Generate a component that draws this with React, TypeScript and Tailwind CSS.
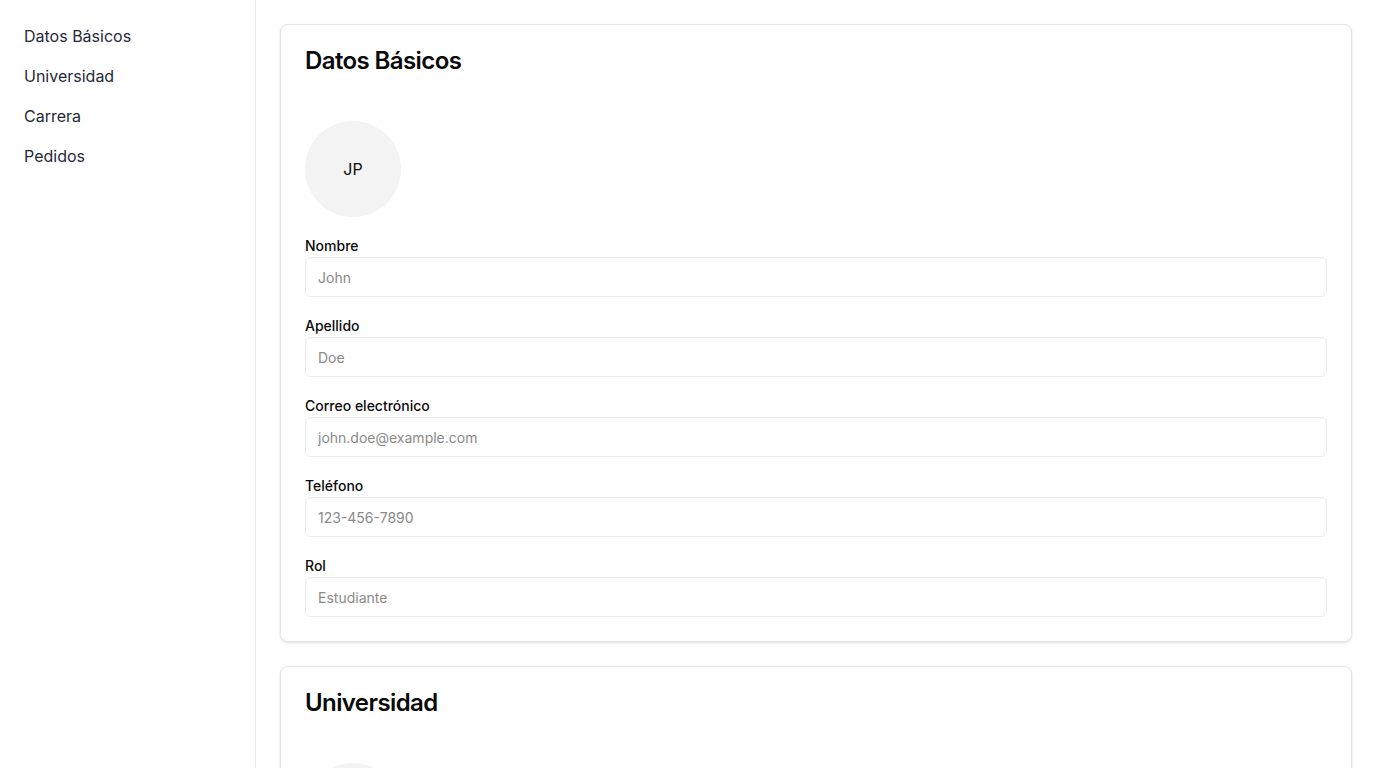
const NAV = ['Datos Básicos', 'Universidad', 'Carrera', 'Pedidos'];

const FIELDS = [
  { label: 'Nombre', placeholder: 'John' },
  { label: 'Apellido', placeholder: 'Doe' },
  { label: 'Correo electrónico', placeholder: 'john.doe@example.com' },
  { label: 'Teléfono', placeholder: '123-456-7890' },
  { label: 'Rol', placeholder: 'Estudiante' },
];

const UNI_FIELDS = [
  { label: 'Universidad', placeholder: 'Universidad Nacional' },
  { label: 'Facultad', placeholder: 'Ingeniería' },
];

function Section({ title, initials, fields }: { title: string; initials: string; fields: { label: string; placeholder: string }[] }) {
  return (
    <section className="rounded-lg border border-[#e5e5e5] bg-white shadow-sm">
      <div className="px-6 pt-6 pb-12">
        <h2 className="text-2xl font-semibold leading-none tracking-tight text-[#0a0a0a]">{title}</h2>
      </div>
      <div className="px-6 pb-6">
        <div className="w-24 h-24 rounded-full bg-[#f3f3f3] flex items-center justify-center text-base text-[#0a0a0a]">
          {initials}
        </div>
        <div className="mt-[19px] flex flex-col gap-[19px]">
          {fields.map(f => (
            <div key={f.label} className="flex flex-col">
              <label className="block text-sm font-medium leading-5 text-[#0a0a0a]">{f.label}</label>
              <input
                placeholder={f.placeholder}
                className="mt-px h-10 w-full rounded-md border border-[#ececec] bg-white px-3 text-sm text-[#0a0a0a] placeholder:text-[#8a8a8a] outline-none"
              />
            </div>
          ))}
        </div>
      </div>
    </section>
  );
}

export default function App() {
  return (
    <div className="flex min-h-screen bg-white font-['Inter',sans-serif]">
      <aside className="w-64 shrink-0 border-r border-[#ebebeb] p-6">
        <nav className="flex flex-col gap-4">
          {NAV.map(n => (
            <a key={n} href="#" className="text-base leading-6 text-[#1f2937]">{n}</a>
          ))}
        </nav>
      </aside>
      <main className="flex-1 p-6 flex flex-col gap-6">
        <Section title="Datos Básicos" initials="JP" fields={FIELDS} />
        <Section title="Universidad" initials="UN" fields={UNI_FIELDS} />
      </main>
    </div>
  );
}
